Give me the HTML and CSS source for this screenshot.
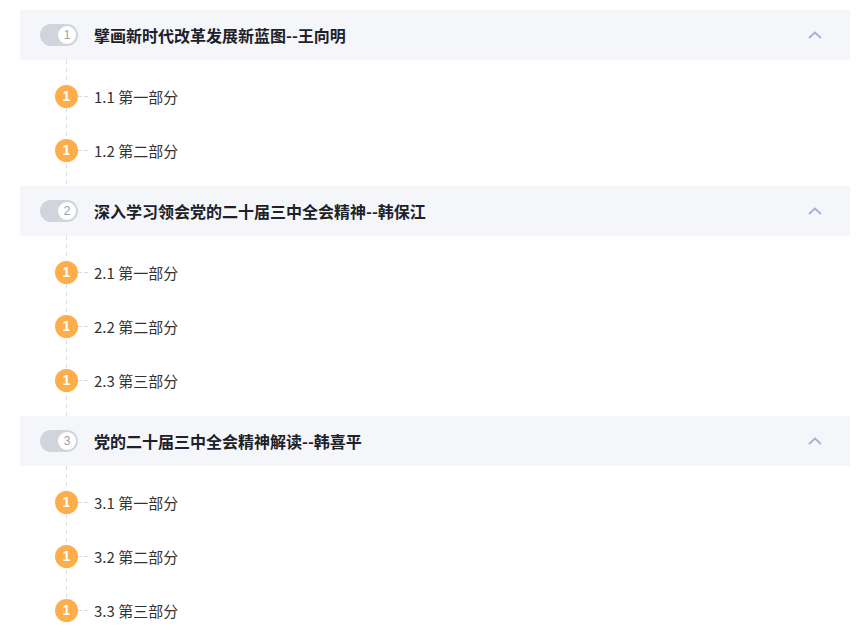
FILE: index.html
```html
<!DOCTYPE html>
<html lang="zh-CN">
<head>
    <meta charset="UTF-8">
    <title>课程目录</title>
    <meta name="viewport" content="width=device-width">
    <link rel="stylesheet" href="styles.css">
</head>
<body>
<div class="catalog">

  <!-- chapter 1 -->
  <div class="chapter">
    <div class="chapter-head">
      <span class="switch"><span class="knob">1</span></span>
      <span class="chapter-title">擘画新时代改革发展新蓝图--王向明</span>
      <svg class="arrow" width="14" height="8" viewBox="0 0 14 8"><path d="M1 7 L7 1.5 L13 7" fill="none" stroke="#9fb3d6" stroke-width="1.8"/></svg>
    </div>
    <ul class="steps">
      <li class="step"><span class="dot">1</span><span class="dash"></span><span class="step-name">1.1 第一部分</span></li>
      <li class="step"><span class="dot">1</span><span class="dash"></span><span class="step-name">1.2 第二部分</span></li>
    </ul>
  </div>

  <!-- chapter 2 -->
  <div class="chapter">
    <div class="chapter-head">
      <span class="switch"><span class="knob">2</span></span>
      <span class="chapter-title">深入学习领会党的二十届三中全会精神--韩保江</span>
      <svg class="arrow" width="14" height="8" viewBox="0 0 14 8"><path d="M1 7 L7 1.5 L13 7" fill="none" stroke="#9fb3d6" stroke-width="1.8"/></svg>
    </div>
    <ul class="steps">
      <li class="step"><span class="dot">1</span><span class="dash"></span><span class="step-name">2.1 第一部分</span></li>
      <li class="step"><span class="dot">1</span><span class="dash"></span><span class="step-name">2.2 第二部分</span></li>
      <li class="step"><span class="dot">1</span><span class="dash"></span><span class="step-name">2.3 第三部分</span></li>
    </ul>
  </div>

  <!-- chapter 3 -->
  <div class="chapter">
    <div class="chapter-head">
      <span class="switch"><span class="knob">3</span></span>
      <span class="chapter-title">党的二十届三中全会精神解读--韩喜平</span>
      <svg class="arrow" width="14" height="8" viewBox="0 0 14 8"><path d="M1 7 L7 1.5 L13 7" fill="none" stroke="#9fb3d6" stroke-width="1.8"/></svg>
    </div>
    <ul class="steps last">
      <li class="step"><span class="dot">1</span><span class="dash"></span><span class="step-name">3.1 第一部分</span></li>
      <li class="step"><span class="dot">1</span><span class="dash"></span><span class="step-name">3.2 第二部分</span></li>
      <li class="step"><span class="dot">1</span><span class="dash"></span><span class="step-name">3.3 第三部分</span></li>
    </ul>
  </div>

</div>
</body>
</html>
```

FILE: styles.css
```css
body {
  margin: 0;
  font-family: "Noto Sans CJK SC", "Noto Sans", sans-serif;
  color: #333;
  background: #fff;
}

.catalog {
  padding: 10px 16px 0 20px;
}

.chapter-head {
  height: 50px;
  display: flex;
  align-items: center;
  background-color: #f5f6fa;
  padding: 0 28px 0 20px;
}

.switch {
  width: 38px;
  height: 22px;
  border-radius: 11px;
  background-color: #d0d4db;
  display: flex;
  justify-content: flex-end;
  align-items: center;
  padding: 2px;
  box-sizing: border-box;
}

.knob {
  width: 18px;
  height: 18px;
  border-radius: 50%;
  background: #fff;
  color: #9aa0a8;
  font-family: "Liberation Sans", Arial, sans-serif;
  font-size: 12px;
  line-height: 18px;
  text-align: center;
}

.chapter-title {
  flex: 1;
  margin-left: 16px;
  font-size: 16px;
  font-weight: bold;
  color: #1d2129;
}

.arrow {
  display: block;
}

/* timeline under each chapter */
.steps {
  list-style: none;
  margin: 0;
  padding: 9px 0;
  position: relative;
}

.steps::before {
  content: "";
  position: absolute;
  left: 46px;
  top: 0;
  bottom: 0;
  width: 1px;
  background: repeating-linear-gradient(to bottom, #d9dce2 0 4px, transparent 4px 8px);
}

.steps.last::before {
  bottom: 40px;
}

.step {
  height: 54px;
  display: flex;
  align-items: center;
  padding-left: 35px;
  position: relative;
}

.dot {
  width: 23px;
  height: 23px;
  border-radius: 50%;
  background-color: #ffad4a;
  color: #fff;
  font-family: "Liberation Sans", Arial, sans-serif;
  font-size: 14px;
  font-weight: bold;
  line-height: 23px;
  text-align: center;
}

.dash {
  width: 10px;
  margin: 0 6px 0 0;
  height: 1px;
  background: repeating-linear-gradient(to right, #d9dce2 0 4px, transparent 4px 6px);
}

.step-name {
  font-size: 15px;
  color: #333;
}
```
